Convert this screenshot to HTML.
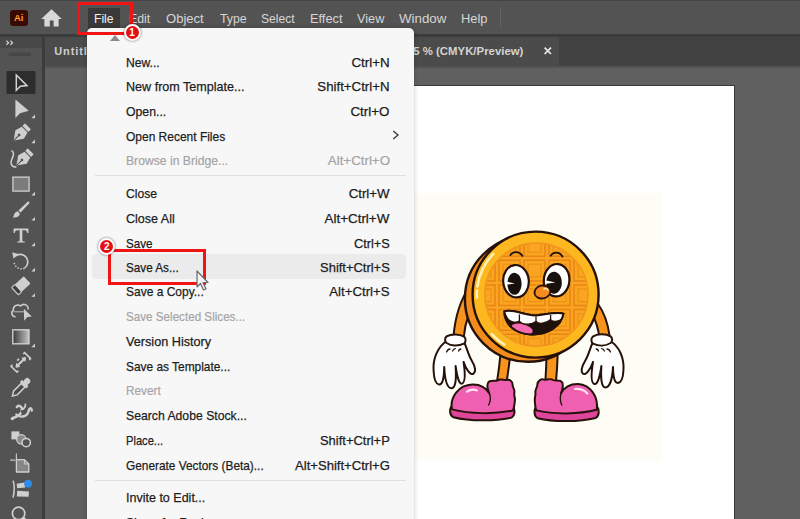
<!DOCTYPE html>
<html><head><meta charset="utf-8">
<style>
*{box-sizing:border-box;margin:0;padding:0}
html,body{width:800px;height:519px;overflow:hidden;background:#606060;font-family:"Liberation Sans",sans-serif}
.abs{position:absolute}
#menubar{left:0;top:0;width:800px;height:34px;background:#535353;border-top:1px solid #454545}
#mbline{left:0;top:34px;width:800px;height:3px;background:#3b3b3b}
#tabbar{left:44px;top:37px;width:756px;height:29px;background:#424242}
#tab{left:44px;top:37px;width:515px;height:29px;background:#4b4b4b}
#tabshadow{left:44px;top:66px;width:756px;height:2px;background:#525252}
#tools{left:0;top:37px;width:43px;height:482px;background:#535353}
#toolstop{left:0;top:37px;width:43px;height:11px;background:#484848}
#tooldiv{left:42px;top:37px;width:3px;height:482px;background:#3c3c3c}
.t{position:absolute;line-height:16px;white-space:nowrap;transform-origin:0 0}
.t.r{transform-origin:100% 0}
.mb{color:#d6d6d6}
.mb.sel{color:#f2f2f2}
.mi{color:#1c1c1c;-webkit-text-stroke:.25px #1c1c1c}
.mi.dis{color:#a4a4a4;-webkit-text-stroke:.2px #a4a4a4}
#artboard{left:300px;top:85px;width:435px;height:440px;background:#fff;border:1px solid #3a3a3a}
#cream{left:413px;top:193px;width:249px;height:267px;background:#fefdf5}
#menu{left:87px;top:28px;width:327px;height:500px;background:#f7f7f7;border-radius:5px;box-shadow:0 0 5px rgba(0,0,0,.22)}
.sep{position:absolute;left:95px;width:311px;height:1px;background:#dedede}
.red{position:absolute;border:3px solid #f01414}
.badge{position:absolute;width:17px;height:17px;border-radius:50%;background:#e60f14;border:2px solid #fff;box-shadow:0 0 2.5px rgba(0,0,0,.6);color:#fff;font-weight:bold;font-size:10px;line-height:13px;text-align:center}
</style></head><body>
<div class="abs" id="menubar"></div>
<div class="abs" id="mbline"></div>
<div class="abs" id="tabbar"></div>
<div class="abs" id="tab"></div>
<div class="abs" id="tabshadow"></div>
<div class="abs" id="tools"></div>
<div class="abs" id="toolstop"></div>
<div class="abs" id="tooldiv"></div>
<svg class="abs" style="left:0;top:37px" width="43" height="482" viewBox="0 37 43 482">
<g fill="none" stroke="#cfcfcf" stroke-width="1.3"><path d="M6.4 40.6 L8.6 42.7 L6.4 44.8 M10.4 40.6 L12.6 42.7 L10.4 44.8"/></g>
<rect x="8.7" y="52.5" width="22" height="3.6" fill="#474747"/>
<rect x="6.5" y="71" width="29" height="23" rx="1" fill="#2d2d2d"/>
<g fill="#cfcfcf">
<!-- selection -->
<path d="M16.3 75 L16.3 90.2 L20.4 86.3 L27 85.6 Z" fill="none" stroke="#d4d4d4" stroke-width="1.5" stroke-linejoin="miter"/>
<!-- direct selection -->
<path d="M15.4 99.4 L15.4 118 L20 113.2 L28.8 110.8 Z"/>
<!-- corner markers -->
<path d="M35 114.6V118.2H31.4Z M35 139.6V143.2H31.4Z M35 191.8V195.4H31.4Z M35 217V220.6H31.4Z M35 242.6V246.2H31.4Z M35 267.8V271.4H31.4Z M35 293.2V296.8H31.4Z M35 343.6V347.2H31.4Z"/>
<!-- pen -->
<g transform="translate(20.8 133.4) rotate(45)">
<rect x="-4.2" y="-10" width="8.4" height="3.6" rx=".6"/>
<path d="M-4 -5.4 H4 L6 1.6 L0 10.2 L-6 1.6 Z"/>
<path d="M0 10.2 V3.4" stroke="#535353" stroke-width="1"/><circle cx="0" cy="2.4" r="1.4" fill="#535353"/>
</g>
<!-- curvature pen -->
<g transform="translate(23.6 158.4) rotate(45)">
<rect x="-4.2" y="-10" width="8.4" height="3.6" rx=".6"/>
<path d="M-4 -5.4 H4 L6 1.6 L0 10.2 L-6 1.6 Z"/>
<path d="M0 10.2 V3.4" stroke="#535353" stroke-width="1"/><circle cx="0" cy="2.4" r="1.4" fill="#535353"/>
</g>
<path d="M11.4 150.6 C14.6 152 13.6 156 11.8 159.4 C10 163 11 167.2 16.4 167" fill="none" stroke="#cfcfcf" stroke-width="1.5"/>
<!-- rectangle -->
<rect x="12.9" y="177.1" width="16.2" height="14" fill="#7c7c7c" stroke="#cfcfcf" stroke-width="1.3"/>
<!-- brush -->
<path d="M28.2 201.2 L29.8 202.8 L20.6 212.6 L18.4 210.4 Z"/>
<path d="M17.6 211.2 L19.8 213.4 C19.6 216.6 16.6 218 12.6 217.4 C14.4 216.4 13.6 212 17.6 211.2 Z"/>
<!-- T -->
<path d="M13.6 228.4 H28.4 V233 H27.2 C27 231 26.4 230.2 24.6 230.2 H22.3 V240 C22.3 241.2 22.8 241.4 24.8 241.5 V242.6 H17.2 V241.5 C19.2 241.4 19.7 241.2 19.7 240 V230.2 H17.4 C15.6 230.2 15 231 14.8 233 H13.6 Z"/>
<!-- rotate -->
<path d="M15.2 256.2 A7.6 7.6 0 1 1 24.5 268.2" fill="none" stroke="#cfcfcf" stroke-width="1.6"/>
<path d="M24.5 268.2 A7.6 7.6 0 0 1 14 262" fill="none" stroke="#cfcfcf" stroke-width="1.6" stroke-dasharray="1.4 1.5"/>
<path d="M12.2 252.2 L18.2 254 L13.6 258.8 Z"/>
<!-- eraser -->
<g transform="translate(21 285.6) rotate(-43)">
<rect x="-3.6" y="-5" width="12" height="10" rx="1"/>
<rect x="-8.2" y="-5" width="4.6" height="10" rx="1" fill="#3c3c3c" stroke="#cfcfcf" stroke-width="1.2"/>
</g>
<!-- shape builder -->
<path d="M15.6 316.8 C11.8 316.8 10.4 312.4 13.4 310.4 C12.6 306.2 17.4 303.4 20.6 306 C23.6 302.6 29 305.2 28 309.6" fill="none" stroke="#cfcfcf" stroke-width="1.5"/>
<path d="M13.6 311.8 H24.6" fill="none" stroke="#bdbdbd" stroke-width="1"/>
<path d="M23.8 308.8 L31.8 316.6 L27.4 317 L24.2 320.8 Z"/>
<!-- gradient -->
<defs><linearGradient id="tg" x1="0" x2="1" y1="0" y2="0"><stop offset="0" stop-color="#3a3a3a"/><stop offset="1" stop-color="#c4c4c4"/></linearGradient></defs>
<rect x="12.8" y="329.8" width="16.2" height="14" fill="url(#tg)" stroke="#cfcfcf" stroke-width="1.4"/>
<!-- width tool -->
<g transform="translate(20.8 362.4) rotate(-45)" fill="none" stroke="#cfcfcf">
<path d="M-7.6 -4.2 H-9.6 V4.2 H-7.6 M7.6 -4.2 H9.6 V4.2 H7.6" stroke-width="1.6"/>
<path d="M-6.6 0 H6.6" stroke-width="2.2"/>
<path d="M-3.6 -3 L-7.2 0 L-3.6 3 Z M3.6 -3 L7.2 0 L3.6 3 Z" fill="#cfcfcf" stroke="none"/>
<path d="M-1.2 -3.8 H1.2" stroke-width="1.8"/>
</g>
<!-- eyedropper -->
<g transform="translate(20.6 387.8) rotate(45)">
<rect x="-3" y="-12.4" width="6" height="7" rx="2.6"/>
<rect x="-4.6" y="-6.6" width="9.2" height="3" rx=".6"/>
<path d="M-2.6 -3.6 H2.6 V7.4 L0 11.6 L-2.6 7.4 Z" fill="#4a4a4a" stroke="#cfcfcf" stroke-width="1.5"/>
</g>
<!-- puppet/symbol -->
<g fill="none" stroke="#cfcfcf" stroke-linecap="round">
<path d="M12.8 418 C17.6 416.6 21.6 414 22 409.6 C22.2 406.4 18.6 404.6 16.8 407" stroke-width="2.4"/>
<path d="M16.4 414.6 C21 418.4 27.6 416.4 28.6 411 C29.2 407.6 31.6 407.4 31.8 410.6" stroke-width="2.4"/>
<path d="M22 409.6 C24 408.6 25.6 406.6 25.4 404.4" stroke-width="1.8"/>
</g>
<circle cx="12.4" cy="418.6" r="1.7"/><circle cx="22.2" cy="411.4" r="1.5" fill="#535353"/>
<!-- live paint -->
<rect x="11.4" y="431.4" width="8" height="8"/>
<circle cx="21.2" cy="439.2" r="4.6" fill="#8a8a8a" stroke="#cfcfcf" stroke-width="1.3"/>
<circle cx="26.2" cy="442.6" r="4.2" fill="#535353" stroke="#cfcfcf" stroke-width="1.5"/>
<!-- artboard -->
<path d="M16.4 453.4 V459 M10.2 460.2 H15.4" fill="none" stroke="#c4c4c4" stroke-width="1.2"/>
<path d="M16.4 459.6 H24.4 L28.8 464 V472 H16.4 Z" fill="#868686" stroke="#cfcfcf" stroke-width="1.3" stroke-linejoin="round"/>
<path d="M24.4 459.6 V464 H28.8" fill="none" stroke="#cfcfcf" stroke-width="1"/>
<!-- blue dot tool -->
<path d="M13.2 480.6 C14.6 486 14.6 492 13 497.6" fill="none" stroke="#cfcfcf" stroke-width="1.5"/>
<path d="M16.6 483.8 L24.6 482.4 L25.2 487.6 L17.2 488.2 Z M17.2 490.8 L29 491.4 L28.6 496.8 L16.8 496.4 Z"/>
<circle cx="28.1" cy="483.7" r="3.9" fill="#2c8cec"/>
<!-- zoom -->
<circle cx="18.6" cy="513.4" r="6.2" fill="none" stroke="#cfcfcf" stroke-width="1.7"/>
<path d="M23.4 518 L28 522.6" stroke="#cfcfcf" stroke-width="2.6"/>
</g>
</svg>


<div class="abs" style="left:10px;top:9.5px;width:17.5px;height:16.5px;border-radius:3.2px;background:#380a02"></div>
<span class="t" style="left:13.6px;top:10.2px;font-size:9.6px;font-weight:bold;color:#ff9e2c;transform:scaleX(.98)">Ai</span>
<svg class="abs" style="left:40px;top:8px" width="24" height="20" viewBox="40 8 24 20"><path d="M51.5 9.3 L61.8 19 L58.6 19 L58.6 26.6 L53.6 26.6 L53.6 20.6 L49.8 20.6 L49.8 26.6 L44.4 26.6 L44.4 19 L41.2 19 Z" fill="#d8d8d8"/></svg>
<div class="abs" style="left:88px;top:7.5px;width:32px;height:21px;background:#393939"></div>
<span class="t mb sel" style="left:93.5px;top:10.9px;font-size:13.5px;transform:scaleX(0.896);">File</span>
<span class="t mb" style="left:129.2px;top:10.9px;font-size:13.5px;transform:scaleX(0.907);">Edit</span>
<span class="t mb" style="left:165.9px;top:10.9px;font-size:13.5px;transform:scaleX(0.966);">Object</span>
<span class="t mb" style="left:219.9px;top:10.9px;font-size:13.5px;transform:scaleX(0.912);">Type</span>
<span class="t mb" style="left:261.4px;top:10.9px;font-size:13.5px;transform:scaleX(0.895);">Select</span>
<span class="t mb" style="left:309.9px;top:10.9px;font-size:13.5px;transform:scaleX(0.948);">Effect</span>
<span class="t mb" style="left:357.2px;top:10.9px;font-size:13.5px;transform:scaleX(0.941);">View</span>
<span class="t mb" style="left:399.0px;top:10.9px;font-size:13.5px;transform:scaleX(0.987);">Window</span>
<span class="t mb" style="left:461.1px;top:10.9px;font-size:13.5px;transform:scaleX(0.954);">Help</span>
<div class="abs" style="left:500px;top:7px;width:1px;height:21px;background:#626262"></div>

<span class="t" style="left:54.2px;top:43.2px;font-size:11px;font-weight:bold;color:#cdcdcd;letter-spacing:.9px">Untitled-1.ai* @ 2</span>
<span class="t r" style="right:276.8px;top:43.2px;font-size:11px;font-weight:bold;color:#d4d4d4;transform:scaleX(1.035)">5 % (CMYK/Preview)</span>
<svg class="abs" style="left:543px;top:46px" width="10" height="10" viewBox="0 0 10 10"><path d="M1.6 1.6 L8 8 M8 1.6 L1.6 8" stroke="#e8e8e8" stroke-width="1.7" fill="none"/></svg>

<div class="abs" id="artboard"></div>
<div class="abs" id="cream"></div>
<svg class="abs" style="left:413px;top:197px" width="247" height="260" viewBox="413 197 247 260">
<defs>
<clipPath id="inner"><circle cx="536.4" cy="294.6" r="51"/></clipPath>
<clipPath id="mouthc"><path d="M504.4 311.4 C514 308.4 525 316 536 315.4 C546 314.8 556 311.4 563.4 313.6 C561.4 326 548 335 531 334.4 C515 333.8 504.4 324 504.4 311.4 Z"/></clipPath>
</defs>
<g stroke="#26120a" stroke-width="2" stroke-linejoin="round" stroke-linecap="round">
<!-- arms -->
<path d="M470 286 C460 300 455 318 453.4 337 L463.6 338 C465 322 470 308 479 297 Z" fill="#f7941d"/>
<path d="M592 314 C596 321 598.4 329 599.4 338 L609.6 336 C608 324 604.6 313 598 304 Z" fill="#f7941d"/>
<!-- legs -->
<path d="M500.4 352 C500 364 498 375 496 388 L505.6 389 C507.4 376 509.4 365 510.4 353 Z" fill="#f7941d"/>
<path d="M546.4 352 C546.6 366 545.8 376 544.8 388 L555.2 388.5 C556.6 376 557.6 366 557.6 352 Z" fill="#f7941d"/>
<!-- back disc -->
<circle cx="527.9" cy="298.8" r="63" fill="#f28c1c" stroke-width="2.4"/>
<!-- front disc -->
<circle cx="535.6" cy="294.6" r="63" fill="#fdb71f" stroke-width="2.4"/>
</g>
<!-- inner waffle -->
<circle cx="536.4" cy="294.6" r="51.6" fill="#f9a51f"/>
<g clip-path="url(#inner)" fill="none"><path d="M474.0 235.5H495.0V256.2H474.0ZM474.0 260.2H495.0V280.9H474.0ZM474.0 284.9H495.0V305.6H474.0ZM474.0 309.6H495.0V330.3H474.0ZM474.0 334.3H495.0V355.0H474.0ZM499.0 235.5H520.0V256.2H499.0ZM499.0 260.2H520.0V280.9H499.0ZM499.0 284.9H520.0V305.6H499.0ZM499.0 309.6H520.0V330.3H499.0ZM499.0 334.3H520.0V355.0H499.0ZM524.0 235.5H545.0V256.2H524.0ZM524.0 260.2H545.0V280.9H524.0ZM524.0 284.9H545.0V305.6H524.0ZM524.0 309.6H545.0V330.3H524.0ZM524.0 334.3H545.0V355.0H524.0ZM549.0 235.5H570.0V256.2H549.0ZM549.0 260.2H570.0V280.9H549.0ZM549.0 284.9H570.0V305.6H549.0ZM549.0 309.6H570.0V330.3H549.0ZM549.0 334.3H570.0V355.0H549.0ZM574.0 235.5H595.0V256.2H574.0ZM574.0 260.2H595.0V280.9H574.0ZM574.0 284.9H595.0V305.6H574.0ZM574.0 309.6H595.0V330.3H574.0ZM574.0 334.3H595.0V355.0H574.0Z" stroke="#e98419" stroke-width="1.5"/><path d="M478.0 239.5H491.0V252.2H478.0ZM478.0 264.2H491.0V276.9H478.0ZM478.0 288.9H491.0V301.6H478.0ZM478.0 313.6H491.0V326.3H478.0ZM478.0 338.3H491.0V351.0H478.0ZM503.0 239.5H516.0V252.2H503.0ZM503.0 264.2H516.0V276.9H503.0ZM503.0 288.9H516.0V301.6H503.0ZM503.0 313.6H516.0V326.3H503.0ZM503.0 338.3H516.0V351.0H503.0ZM528.0 239.5H541.0V252.2H528.0ZM528.0 264.2H541.0V276.9H528.0ZM528.0 288.9H541.0V301.6H528.0ZM528.0 313.6H541.0V326.3H528.0ZM528.0 338.3H541.0V351.0H528.0ZM553.0 239.5H566.0V252.2H553.0ZM553.0 264.2H566.0V276.9H553.0ZM553.0 288.9H566.0V301.6H553.0ZM553.0 313.6H566.0V326.3H553.0ZM553.0 338.3H566.0V351.0H553.0ZM578.0 239.5H591.0V252.2H578.0ZM578.0 264.2H591.0V276.9H578.0ZM578.0 288.9H591.0V301.6H578.0ZM578.0 313.6H591.0V326.3H578.0ZM578.0 338.3H591.0V351.0H578.0Z" stroke="#ee8e1b" stroke-width="1.1"/></g>
<circle cx="536.4" cy="294.6" r="51.6" fill="none" stroke="#f0931c" stroke-width="1.4"/>
<!-- highlights -->
<path d="M493.3 253.8 A58.8 58.8 0 0 0 477.4 286.4" fill="none" stroke="#fff1b8" stroke-width="2.6" stroke-linecap="round"/>
<path d="M476.9 290.5 A58.8 58.8 0 0 0 476.9 297.7" fill="none" stroke="#fff1b8" stroke-width="2.6" stroke-linecap="round"/>
<path d="M491.8 334.1 A59 59 0 0 0 504.3 344.6" fill="none" stroke="#fff1b8" stroke-width="2.8" stroke-linecap="round"/>
<g stroke="#26120a" stroke-width="2" stroke-linejoin="round" stroke-linecap="round">
<!-- eyebrows -->
<path d="M510.4 255.2 C512.6 251 519.6 250.8 522.4 256" fill="none" stroke-width="1.8"/>
<path d="M550.8 255.6 C553 251.4 560 251.4 562.4 256.6" fill="none" stroke-width="1.8"/>
<!-- eyes -->
<ellipse cx="516" cy="281.2" rx="12.8" ry="16.2" fill="#fff" stroke-width="2.2" transform="rotate(-5 516 281.2)"/>
<ellipse cx="556.6" cy="280.2" rx="12.8" ry="16.2" fill="#fff" stroke-width="2.2" transform="rotate(5 556.6 280.2)"/>
<path d="M515 283.4 L507.5 281.8 A7.1 11 0 1 1 507.4 284.6 Z" fill="#17100c" stroke="none"/>
<path d="M555.5 282.5 L546.4 280.6 A7.8 11 0 1 1 546.3 283.8 Z" fill="#17100c" stroke="none"/>
<!-- nose -->
<ellipse cx="542.4" cy="292" rx="8" ry="6.4" fill="#f58a1f" stroke-width="1.8" transform="rotate(-12 542.4 292)"/>
<!-- mouth -->
<path d="M504.4 311.4 C514 308.4 525 316 536 315.4 C546 314.8 556 311.4 563.4 313.6 C561.4 326 548 335 531 334.4 C515 333.8 504.4 324 504.4 311.4 Z" fill="#1d110d"/>
</g>
<path d="M544 289 C545.6 288 547.4 288.6 548 290" fill="none" stroke="#ffe0a6" stroke-width="1.6" stroke-linecap="round"/>
<g clip-path="url(#mouthc)">
<ellipse cx="522" cy="329" rx="11" ry="5" fill="#f56ab0" transform="rotate(14 522 329)"/>
<path d="M502 308 L566 308 L562.4 318.6 C558 322.6 552.6 322 550.6 319.6 C546 324 538.6 324.4 536 321.6 C531 325.6 521.6 324.6 519.4 321 C515.6 323.6 509.4 321.6 507.4 318.4 Z" fill="#fff" stroke="#26120a" stroke-width="1.4"/>
<path d="M519.4 314.6 V321 M536 316.4 V321.6 M550.6 315 V319.6" stroke="#26120a" stroke-width="1.3" fill="none"/>
</g>
<path d="M504.4 311.4 C514 308.4 525 316 536 315.4 C546 314.8 556 311.4 563.4 313.6 C561.4 326 548 335 531 334.4 C515 333.8 504.4 324 504.4 311.4 Z" fill="none" stroke="#26120a" stroke-width="2"/>
<g stroke="#26120a" stroke-width="2" stroke-linejoin="round" stroke-linecap="round">
<!-- left glove -->
<path d="M446.6 341 C438 347 432.6 358 433.6 371 C434 379 435.6 384 439 384.4 C442.8 384.6 444 378 444.2 367 C444.8 378 447 388.4 451.6 388.2 C455.8 388 456.4 379 455.6 366 C457 376 459 384.6 462 383.6 C465.6 382.4 465.2 373 463.6 362 C466 369 470.6 376 473.6 373.6 C476.6 371 474.6 365.4 471.4 360 C468.4 355 467 348 464 342 Z" fill="#fff"/>
<path d="M446.6 336.4 C451 333.6 460 333.8 464 336.6 C466.2 338.6 466 342 464 343.6 C458 346.4 451 346 446.6 343 C444.6 341.4 444.6 338 446.6 336.4 Z" fill="#fff"/>
<!-- right glove -->
<path d="M610 341 C619 346 624.6 358 623.4 371 C623 378 621.4 382.6 618 383 C614.4 383.2 613.2 377 613 367 C612.4 378 610 387.4 605.6 387.4 C601.4 387.4 600.6 379 601.4 366 C600 376 597.6 385 594.4 384 C590.8 383 591.2 373 593 362 C590.6 369 585.6 376 582.8 373.6 C580 371 582.4 365.4 585.6 360 C588.6 355 590 348 593 342 Z" fill="#fff"/>
<path d="M610.6 336.4 C606 333.4 597 333.6 592.8 336.6 C590.8 338.6 591 342 593 343.6 C599 346.4 606 346 610.6 343 C612.6 341.4 612.6 338 610.6 336.4 Z" fill="#fff"/>
<!-- left shoe -->
<path d="M451.6 406 C449 409.6 449.8 415.4 453.4 417.2 C470 421.6 497 421 511.6 417.6 C515 415.6 515.4 410 513 406.4 Z" fill="#e0459c"/>
<path d="M452 409.4 C449.6 397 458.6 385.2 472.4 384.6 C480.4 384.4 486.4 388.4 489.4 393.6 C487.4 389.4 486.6 385.6 488.2 382.6 C490 379.4 495.6 381.6 497.6 380.4 C500.6 378.2 504.6 380.6 506.6 380 C509.6 379 512.6 381.6 512.6 384.6 C512.4 387.4 515 389.4 514.4 392.6 C513.6 395.6 515.6 398 514.8 401.4 C514.4 404.4 514.4 407 513 410.4 C495 414.4 470 414 452 409.4 Z" fill="#f060b0"/>
<!-- right shoe -->
<path d="M597 406.4 C599.8 410 599.2 416 595.6 418 C579 422.4 552 421.8 537.6 418.2 C534 416.2 533.6 410.6 536 406.8 Z" fill="#e0459c"/>
<path d="M596.8 409.8 C598.6 397 590.6 384.8 578.2 384 C570.2 383.8 564 387.8 561 393.2 C562.8 389 563.6 385.4 562.2 382.4 C560.4 379.2 555 381.2 553 380 C550 377.8 546 380.2 544 379.6 C541 378.6 537.6 381 537.4 384.4 C537.4 387.4 535 389.4 535.4 392.6 C536 395.6 534.2 398 534.8 401.4 C535.2 404.4 535 407 536.2 410.4 C554 414.6 579 414.4 596.8 409.8 Z" fill="#f060b0"/>
</g>
<!-- shoe highlights -->
<path d="M467 391.6 C470 389.6 474 389.2 477 390.4" fill="none" stroke="#ffe3f2" stroke-width="2.2" stroke-linecap="round"/>
<path d="M575 389 C580 388.6 584.6 390.4 587.4 393.4" fill="none" stroke="#ffe3f2" stroke-width="2.2" stroke-linecap="round"/>
<path d="M489.6 394 C490.8 398 490.4 402 488.6 405 M561 393.4 C559.8 398 560.2 402 561.8 405" fill="none" stroke="#26120a" stroke-width="1.4" stroke-linecap="round"/>
<!-- glove lines -->
<path d="M446.6 352 C447.4 350 448.6 349 450 349 M452.6 351 C453.2 349.4 454.2 348.6 455.4 348.6 M458.6 351 C459 349.6 459.8 349 460.8 349 M610.4 352 C609.6 350 608.4 349 607 349 M604.4 351 C603.8 349.4 602.8 348.6 601.6 348.6 M598.4 351 C598 349.6 597.2 349 596.2 349" stroke="#26120a" stroke-width="1.3" stroke-linecap="round" fill="none"/>
</svg>


<div class="abs" id="menu"></div>
<svg class="abs" style="left:108px;top:34px" width="14" height="8" viewBox="0 0 14 8"><path d="M2 7 L7 1 L12 7 Z" fill="#8a8a8a"/></svg>
<div class="abs" style="left:92px;top:254px;width:314px;height:25px;background:#ebebeb;border-radius:4px"></div>
<div class="sep" style="top:175px"></div>
<div class="sep" style="top:480px"></div>
<span class="t mi " style="left:125.9px;top:54.8px;font-size:13.5px;transform:scaleX(0.898);">New...</span>
<span class="t mi " style="left:125.9px;top:79.3px;font-size:13.5px;transform:scaleX(0.931);">New from Template...</span>
<span class="t mi " style="left:125.9px;top:104.0px;font-size:13.5px;transform:scaleX(0.908);">Open...</span>
<span class="t mi " style="left:125.9px;top:128.8px;font-size:13.5px;transform:scaleX(0.887);">Open Recent Files</span>
<span class="t mi dis" style="left:125.9px;top:153.0px;font-size:13.5px;transform:scaleX(0.902);">Browse in Bridge...</span>
<span class="t mi " style="left:125.9px;top:186.0px;font-size:13.5px;transform:scaleX(0.897);">Close</span>
<span class="t mi " style="left:125.9px;top:210.5px;font-size:13.5px;transform:scaleX(0.927);">Close All</span>
<span class="t mi " style="left:125.9px;top:235.5px;font-size:13.5px;transform:scaleX(0.860);">Save</span>
<span class="t mi " style="left:125.9px;top:260.0px;font-size:13.5px;transform:scaleX(0.867);">Save As...</span>
<span class="t mi " style="left:125.9px;top:284.3px;font-size:13.5px;transform:scaleX(0.888);">Save a Copy...</span>
<span class="t mi dis" style="left:125.9px;top:309.3px;font-size:13.5px;transform:scaleX(0.863);">Save Selected Slices...</span>
<span class="t mi " style="left:125.9px;top:333.8px;font-size:13.5px;transform:scaleX(0.938);">Version History</span>
<span class="t mi " style="left:125.9px;top:358.5px;font-size:13.5px;transform:scaleX(0.881);">Save as Template...</span>
<span class="t mi dis" style="left:125.9px;top:383.0px;font-size:13.5px;transform:scaleX(0.873);">Revert</span>
<span class="t mi " style="left:125.9px;top:408.0px;font-size:13.5px;transform:scaleX(0.905);">Search Adobe Stock...</span>
<span class="t mi " style="left:125.9px;top:433.0px;font-size:13.5px;transform:scaleX(0.824);">Place...</span>
<span class="t mi " style="left:125.9px;top:457.6px;font-size:13.5px;transform:scaleX(0.878);">Generate Vectors (Beta)...</span>
<span class="t mi " style="left:125.9px;top:490.4px;font-size:13.5px;transform:scaleX(0.927);">Invite to Edit...</span>
<span class="t mi " style="left:125.9px;top:515.0px;font-size:13.5px;transform:scaleX(0.900);">Share for Review...</span>
<span class="t r mi " style="right:410.4px;top:54.8px;font-size:13.5px;transform:scaleX(0.989);">Ctrl+N</span>
<span class="t r mi " style="right:410.4px;top:79.3px;font-size:13.5px;transform:scaleX(0.982);">Shift+Ctrl+N</span>
<span class="t r mi " style="right:410.4px;top:104.0px;font-size:13.5px;transform:scaleX(0.989);">Ctrl+O</span>
<span class="t r mi dis" style="right:410.4px;top:153.0px;font-size:13.5px;transform:scaleX(0.987);">Alt+Ctrl+O</span>
<span class="t r mi " style="right:410.4px;top:186.0px;font-size:13.5px;transform:scaleX(0.984);">Ctrl+W</span>
<span class="t r mi " style="right:410.4px;top:210.5px;font-size:13.5px;transform:scaleX(0.991);">Alt+Ctrl+W</span>
<span class="t r mi " style="right:410.4px;top:235.5px;font-size:13.5px;transform:scaleX(0.949);">Ctrl+S</span>
<span class="t r mi " style="right:410.4px;top:260.0px;font-size:13.5px;transform:scaleX(0.958);">Shift+Ctrl+S</span>
<span class="t r mi " style="right:410.4px;top:284.3px;font-size:13.5px;transform:scaleX(0.979);">Alt+Ctrl+S</span>
<span class="t r mi " style="right:410.4px;top:433.0px;font-size:13.5px;transform:scaleX(0.959);">Shift+Ctrl+P</span>
<span class="t r mi " style="right:410.4px;top:457.6px;font-size:13.5px;transform:scaleX(0.969);">Alt+Shift+Ctrl+G</span>
<svg class="abs" style="left:391px;top:129px" width="10" height="12" viewBox="0 0 10 12"><path d="M2.3 2 L7 6 L2.3 10" stroke="#333" stroke-width="1.3" fill="none"/></svg>

<div class="red" style="left:77px;top:2px;width:56.2px;height:32.5px"></div>
<div class="red" style="left:107.8px;top:249.4px;width:98px;height:35.8px"></div>
<div class="badge" style="left:123.5px;top:24px">1</div>
<div class="badge" style="left:98.3px;top:238.4px">2</div>
<svg class="abs" style="left:194.6px;top:269.2px" width="16" height="24" viewBox="0 0 16 24"><path d="M2 2 L2 18 L5.5 14.5 L8.5 21 L11 20 L8 13.5 L13 13.5 Z" fill="#f2f2f2" stroke="#6a6a6a" stroke-width="1.2" stroke-linejoin="round"/></svg>
</body></html>
